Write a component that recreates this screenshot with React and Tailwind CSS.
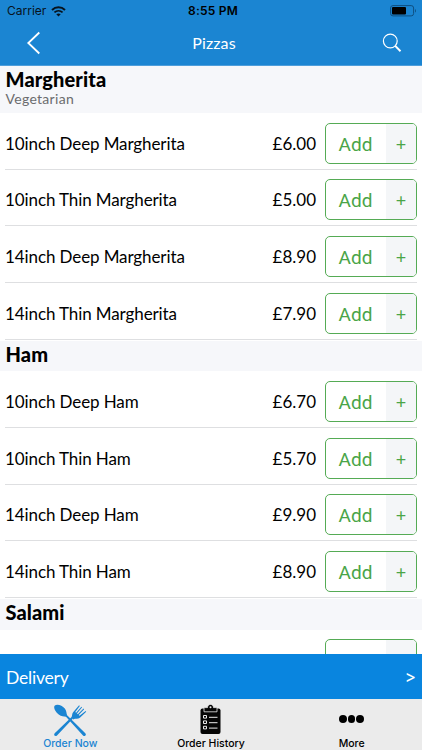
import React from "react";

const sections = [
  {
    title: "Margherita",
    subtitle: "Vegetarian",
    items: [
      { name: "10inch Deep Margherita", price: "£6.00" },
      { name: "10inch Thin Margherita", price: "£5.00" },
      { name: "14inch Deep Margherita", price: "£8.90" },
      { name: "14inch Thin Margherita", price: "£7.90" },
    ],
  },
  {
    title: "Ham",
    items: [
      { name: "10inch Deep Ham", price: "£6.70" },
      { name: "10inch Thin Ham", price: "£5.70" },
      { name: "14inch Deep Ham", price: "£9.90" },
      { name: "14inch Thin Ham", price: "£8.90" },
    ],
  },
  {
    title: "Salami",
    items: [{ name: "", price: "" }],
  },
];

function WifiIcon() {
  return (
    <svg width="15" height="11" viewBox="0 0 15 11" fill="none" stroke="#07131d">
      <path d="M1 3.9C4.7.4 10.3.4 14 3.9" strokeWidth="2" />
      <path d="M3.4 6.4c2.4-2.1 5.8-2.1 8.2 0" strokeWidth="1.9" />
      <path d="M5.3 8.2c1.3-1.1 3.1-1.1 4.4 0L7.5 10.6z" fill="#07131d" stroke="none" />
    </svg>
  );
}

function BatteryIcon() {
  return (
    <svg width="27" height="12" viewBox="0 0 27 12" fill="none">
      <rect x="0.6" y="0.6" width="23" height="10.3" rx="2.4" stroke="#0f4f80" strokeWidth="1" />
      <rect x="2" y="2" width="14" height="7.5" rx="1" fill="#000" />
      <path d="M25 4v3.6c1.2-.4 1.2-3.2 0-3.6z" fill="#0f4f80" />
    </svg>
  );
}

function CutleryIcon() {
  return (
    <svg width="34" height="33" viewBox="0 0 34 33" fill="#1b85d2">
      {/* spoon */}
      <path d="M1.6 1.7C3.6-.1 9 .8 11.8 4.6c1.8 2.5 1.6 4.7 2.3 6.7L32.3 29.2c1.6 1.8-.6 3.8-2.3 2.3L13 12.8c-2-.5-4.6 0-7.3-2.2C2 7.7.3 3.5 1.6 1.7z" />
      {/* fork */}
      <path d="M20 14.4 4 31.5c-1.7 1.5-3.9-.5-2.3-2.3L18.6 13c.8-1.8.2-3.3 1.7-5.1L26.1 1.3l.7.6-4.5 6.2.8.7 5.3-6.1.7.6-5.1 6.2.8.7 5.7-5.6.7.7-5.5 5.8.8.7 6.1-4.8.6.7-6.3 6.1c-1.9 1.5-4.4.5-6.9 1.6z" />
    </svg>
  );
}

function ClipboardIcon() {
  return (
    <svg width="21" height="31" viewBox="0 0 21 31">
      <rect x="0.5" y="4.5" width="20" height="25.5" rx="2" fill="#050505" />
      <path d="M4 3.6h3.5C7.6-.6 13.4-.6 13.5 3.6H17v4.2H4z" fill="#050505" stroke="#ebebeb" strokeWidth="0.8" />
      <circle cx="10.5" cy="3.3" r="1" fill="#ebebeb" />
      <g fill="none" stroke="#ebebeb" strokeWidth="1">
        <path d="M3.5 11.5h3v2.6h-3zM3.5 16.9h3v2.6h-3zM3.5 22.3h3v2.6h-3z" />
        <path d="M9 13.3h8.5M9 18.7h8.5M9 24.1h8.5" />
      </g>
    </svg>
  );
}

function MenuRow({ name, price }) {
  return (
    <div className="ml-[5px] mr-[5.5px] h-[56.67px] pt-[5px] shrink-0 border-b border-[#dedfe1] flex items-center text-black">
      <span className="grow text-[17px] tracking-[-0.1px] whitespace-nowrap">{name}</span>
      <span className="mr-[8.5px] text-[17px]">{price}</span>
      <button className="w-[92px] h-[41px] shrink-0 rounded-[5px] border border-[#55ab55] overflow-hidden flex text-[#4aa548] bg-white">
        <span className="w-[60px] h-full pt-[3px] flex items-center justify-center font-[Roboto,sans-serif] text-[19px]">
          {name && "Add"}
        </span>
        <span className="grow h-full pl-px pt-[2px] bg-[#f4f6f8] flex items-center justify-center text-[18px]">
          {name && "+"}
        </span>
      </button>
    </div>
  );
}

function Section({ title, subtitle, items }) {
  return (
    <div className="shrink-0">
      <div
        className={`bg-[#f6f7fa] px-[5.5px] text-black ${
          subtitle ? "h-[47px] pt-[2px]" : "mt-px h-[30.67px] pt-[2px]"
        }`}
      >
        <h2 className="text-[20px] leading-[23px] tracking-[0.1px] font-black">{title}</h2>
        {subtitle && (
          <p className="text-[14px] leading-[16px] tracking-[0.3px] text-[#6b6c6e]">{subtitle}</p>
        )}
      </div>
      {items.map((item, i) => (
        <MenuRow key={i} {...item} />
      ))}
    </div>
  );
}

export default function App() {
  return (
    <div className="w-full h-[750px] flex flex-col overflow-hidden bg-white font-[Lato,sans-serif]">
      <header className="h-[66px] shrink-0 bg-[#1b85d2] border-b border-[#4e9edb]">
        <div className="h-[22px] grid grid-cols-3 items-center pl-[7px] pr-[5px] font-[Inter,sans-serif] text-[12px] text-[#07131d]">
          <div className="flex items-center gap-[5px]">
            <span>Carrier</span>
            <WifiIcon />
          </div>
          <span className="pl-[2px] text-center font-semibold tracking-[0.2px] text-black">8:55 PM</span>
          <div className="flex justify-end">
            <BatteryIcon />
          </div>
        </div>
        <div className="h-[41px] grid grid-cols-3 items-center pl-[26px] pr-[20px] text-white">
          <svg width="15" height="24" viewBox="0 0 15 24" fill="none" stroke="white" strokeWidth="1.8">
            <path d="M13.3 1.5 2.3 12l11 10.5" />
          </svg>
          <h1 className="text-center text-[16px] tracking-[0.1px]">Pizzas</h1>
          <svg className="justify-self-end" width="20" height="20" viewBox="0 0 20 20" fill="none" stroke="white">
            <circle cx="8.3" cy="8" r="6.9" strokeWidth="1.2" />
            <path d="m13.2 12.9 5.3 5.3" strokeWidth="2" />
          </svg>
        </div>
      </header>

      <main className="grow min-h-0 overflow-hidden flex flex-col">
        {sections.map((section) => (
          <Section key={section.title} {...section} />
        ))}
      </main>

      <button className="h-[45px] shrink-0 bg-[#0985df] text-white flex items-center justify-between px-[6px]">
        <span className="text-[17.5px] tracking-[-0.2px] pt-[3px]">Delivery</span>
        <span className="text-[17px] font-[Inter,sans-serif] pt-[3px]">&gt;</span>
      </button>

      <nav className="h-[51px] shrink-0 bg-[#ebebeb] grid grid-cols-3 font-[Inter,sans-serif] text-[10.5px] font-medium text-black">
        <div className="flex flex-col items-center text-[#1b85d2]">
          <div className="h-[38px] flex items-center pt-[4px]">
            <CutleryIcon />
          </div>
          <span className="leading-[13px]">Order Now</span>
        </div>
        <div className="flex flex-col items-center">
          <div className="h-[38px] flex items-center pt-[3px]">
            <ClipboardIcon />
          </div>
          <span className="leading-[13px]">Order History</span>
        </div>
        <div className="flex flex-col items-center">
          <div className="h-[38px] flex items-center gap-px pt-[2px]">
            <i className="size-[7.5px] rounded-full bg-black" />
            <i className="size-[7.5px] rounded-full bg-black" />
            <i className="size-[7.5px] rounded-full bg-black" />
          </div>
          <span className="leading-[13px]">More</span>
        </div>
      </nav>
    </div>
  );
}
